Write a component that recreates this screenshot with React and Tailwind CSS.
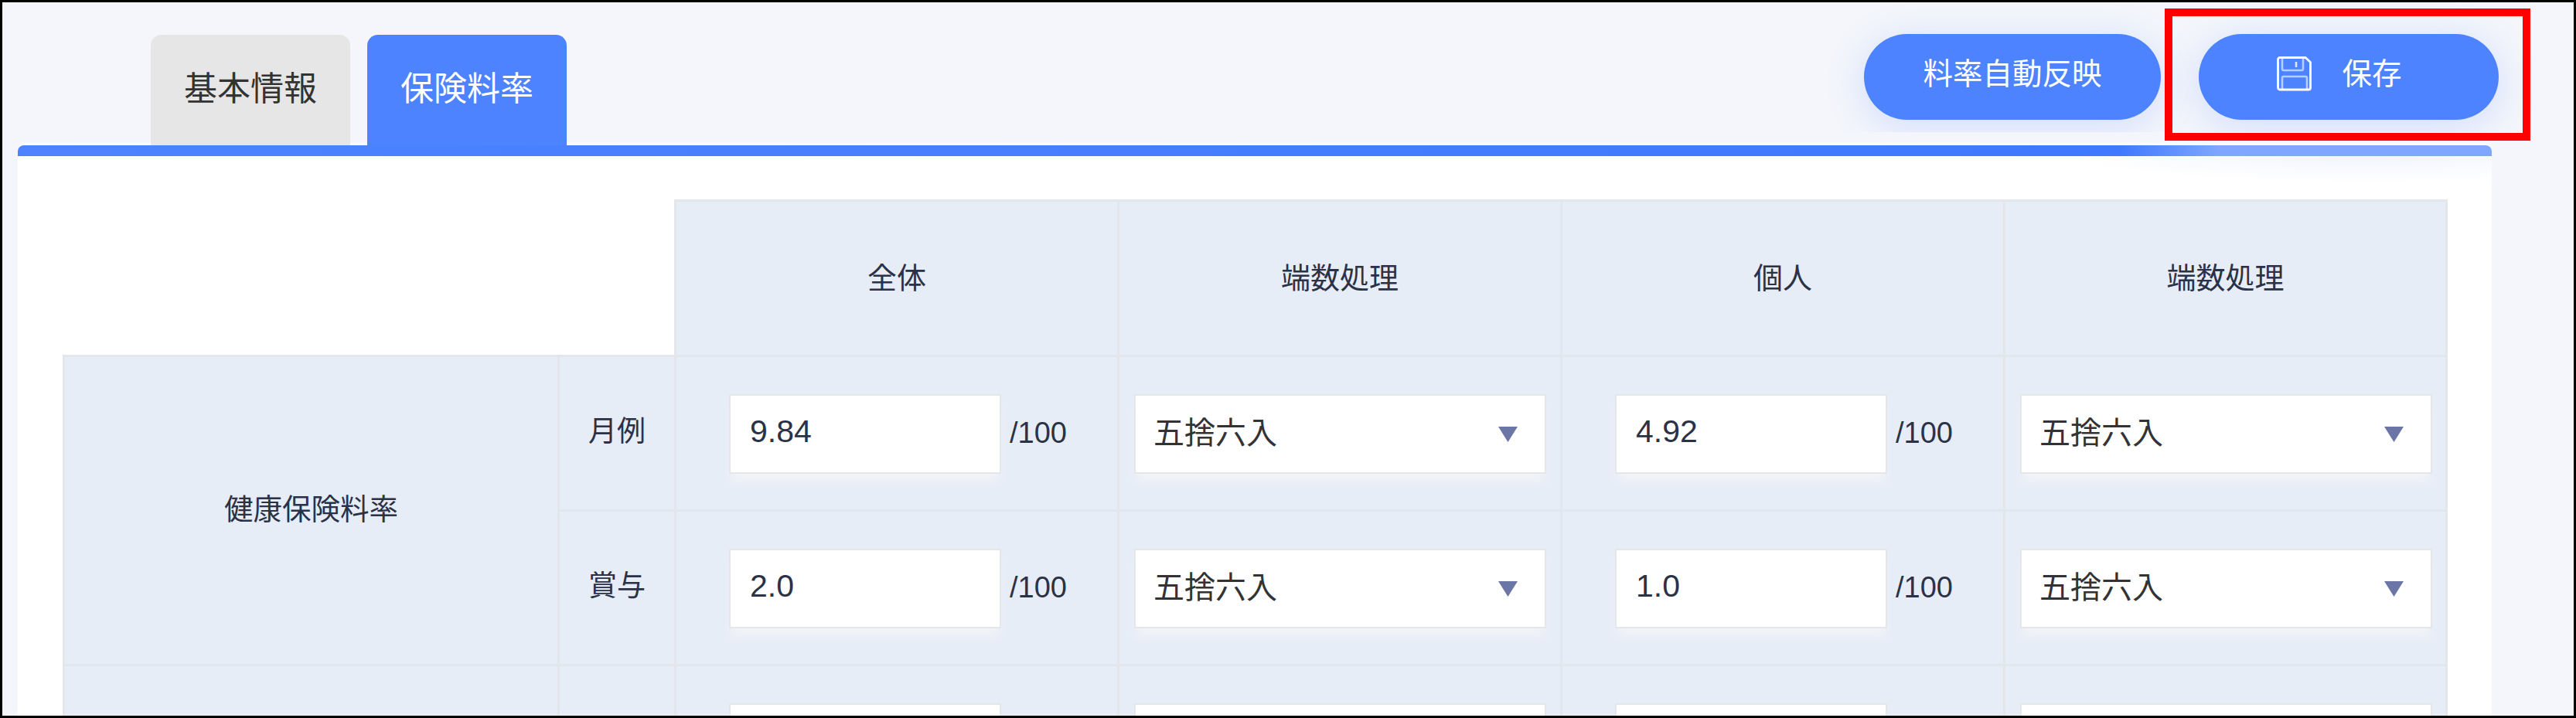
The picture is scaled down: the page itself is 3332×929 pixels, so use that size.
import React from "react";

const font = "font-['Liberation_Sans','Noto_Sans_CJK_JP',sans-serif]";
const line = "border-[3px] border-[#e3e6ea] bg-[#e7edf7]";

function SaveIcon() {
  return (
    <svg viewBox="0 0 45 45" className="w-[45px] h-[45px]" fill="none" stroke="#ffffff">
      <path strokeWidth="2.8" d="M4 1.5h33l6.5 6v33a2.5 2.5 0 0 1-2.5 2.5H4a2.5 2.5 0 0 1-2.5-2.5V4A2.5 2.5 0 0 1 4 1.5z" />
      <path strokeWidth="2.6" opacity="0.6" d="M7 2v14a2 2 0 0 0 2 2h23a2 2 0 0 0 2-2V2" />
      <path strokeWidth="2.6" opacity="0.8" d="M25 7v7" />
      <path strokeWidth="2.6" opacity="0.6" d="M7 43V28a2 2 0 0 1 2-2h28a2 2 0 0 1 2 2v15" />
    </svg>
  );
}

function RateInput({ value, unit = true }) {
  return (
    <div className="flex items-center pl-[68px] pt-[2px]">
      <input
        readOnly
        value={value}
        className={`w-[352px] h-[103px] bg-white border-2 border-[#e5e6e8] pl-[25px] pb-[6px] text-[41px] text-[#2b3247] outline-none shadow-[0_14px_10px_-4px_#f1f3f7] ${font}`}
      />
      {unit && <span className="ml-[11px] text-[38px] pb-[3px] text-[#2b3247]">/100</span>}
    </div>
  );
}

function RoundSelect({ show = true }) {
  return (
    <div className="pl-[19px] pt-[2px]">
      <div className="flex items-center justify-between w-[533px] h-[103px] bg-white border-2 border-[#e5e6e8] pl-[23px] pr-[35px] shadow-[0_14px_10px_-4px_#f1f3f7]">
        <span className="text-[40px] text-[#333333] pb-[4px]">{show ? "五捨六入" : ""}</span>
        <svg viewBox="0 0 25 20" className="w-[25px] h-[20px]">
          <path d="M0 0h25L12.5 20z" fill="#6b76a6" />
        </svg>
      </div>
    </div>
  );
}

function DataRow({ label, group, values }) {
  return (
    <tr className="h-[200px]">
      {group}
      <td className={`${line} text-center text-[37px] text-[#2b3247] pb-[4px]`}>{label}</td>
      <td className={`${line} p-0`}><RateInput value={values[0]} /></td>
      <td className={`${line} p-0`}><RoundSelect /></td>
      <td className={`${line} p-0`}><RateInput value={values[1]} /></td>
      <td className={`${line} p-0`}><RoundSelect /></td>
    </tr>
  );
}

export default function App() {
  return (
    <div className={`relative w-[3332px] h-[929px] overflow-hidden border-[3px] border-black bg-[#f4f6fb] ${font}`}>
      {/* タブとボタン */}
      <div className="flex justify-between h-[185px] pl-[192px] pr-[37px]">
        <div className="flex items-end gap-[22px]">
          <div className="relative flex justify-center w-[258px] h-[143px] pt-[38px] rounded-t-[14px] bg-[#e6e6e6] text-[43px] text-[#333333]">
            基本情報
          </div>
          <div className="relative flex justify-center w-[258px] h-[143px] pt-[38px] rounded-t-[14px] bg-[#4d83ff] text-[43px] text-white">
            保険料率
          </div>
        </div>
        <div className="flex gap-[49px] h-[168px] pl-[46px] pr-[60px] pt-[41px] overflow-hidden">
          <button className="w-[384px] h-[111px] pb-[8px] rounded-full bg-[#4d83ff] text-[38.5px] text-white shadow-[0_8px_50px_rgba(77,131,255,0.22)]">
            料率自動反映
          </button>
          <button className="flex items-center justify-center gap-[39px] w-[388px] h-[111px] pb-[8px] pr-[24px] rounded-full bg-[#4d83ff] text-[38.5px] text-white shadow-[0_8px_50px_rgba(77,131,255,0.22)]">
            <SaveIcon />
            保存
          </button>
        </div>
      </div>

      {/* 本体 */}
      <div className="ml-[20px] w-[3200px]">
        <div className="h-[14px] rounded-t-[8px] shadow-[0_-3px_3px_rgba(255,255,255,0.7)] bg-[linear-gradient(90deg,#4d83ff_0%,#3f79ff_85%,#7fa7ff_89%,#7fa7ff_100%)]" />
        <div className="h-[800px] pl-[58px] pt-[56px] bg-[radial-gradient(ellipse_380px_34px_at_3040px_0,#f2f5fe,transparent),linear-gradient(#ffffff,#ffffff)]">
          <table className="w-[3082px] table-fixed border-collapse text-[37.5px] text-[#2b3247]">
            <colgroup>
              <col className="w-[640px]" />
              <col className="w-[151px]" />
              <col className="w-[573px]" />
              <col className="w-[573px]" />
              <col className="w-[573px]" />
              <col className="w-[572px]" />
            </colgroup>
            <tbody>
              <tr className="h-[201px] text-[38px]">
                <td colSpan={2} className="border-0 bg-white p-0"></td>
                <td className={`${line} text-center`}>全体</td>
                <td className={`${line} text-center`}>端数処理</td>
                <td className={`${line} text-center`}>個人</td>
                <td className={`${line} text-center`}>端数処理</td>
              </tr>
              <DataRow
                label="月例"
                values={["9.84", "4.92"]}
                group={<td rowSpan={2} className={`${line} text-center pb-[2px]`}>健康保険料率</td>}
              />
              <DataRow
                label="賞与"
                values={["2.0", "1.0"]}
              />
              <tr className="h-[200px]">
                <td className={line}></td>
                <td className={line}></td>
                <td className={`${line} p-0`}><RateInput value="" unit={false} /></td>
                <td className={`${line} p-0`}><RoundSelect show={false} /></td>
                <td className={`${line} p-0`}><RateInput value="" unit={false} /></td>
                <td className={`${line} p-0`}><RoundSelect show={false} /></td>
              </tr>
            </tbody>
          </table>
        </div>
      </div>

      {/* 注釈の赤枠 */}
      <div className="absolute left-[2797px] top-[8px] w-[473px] h-[171px] border-[10px] border-[#ff0000]" />
    </div>
  );
}
